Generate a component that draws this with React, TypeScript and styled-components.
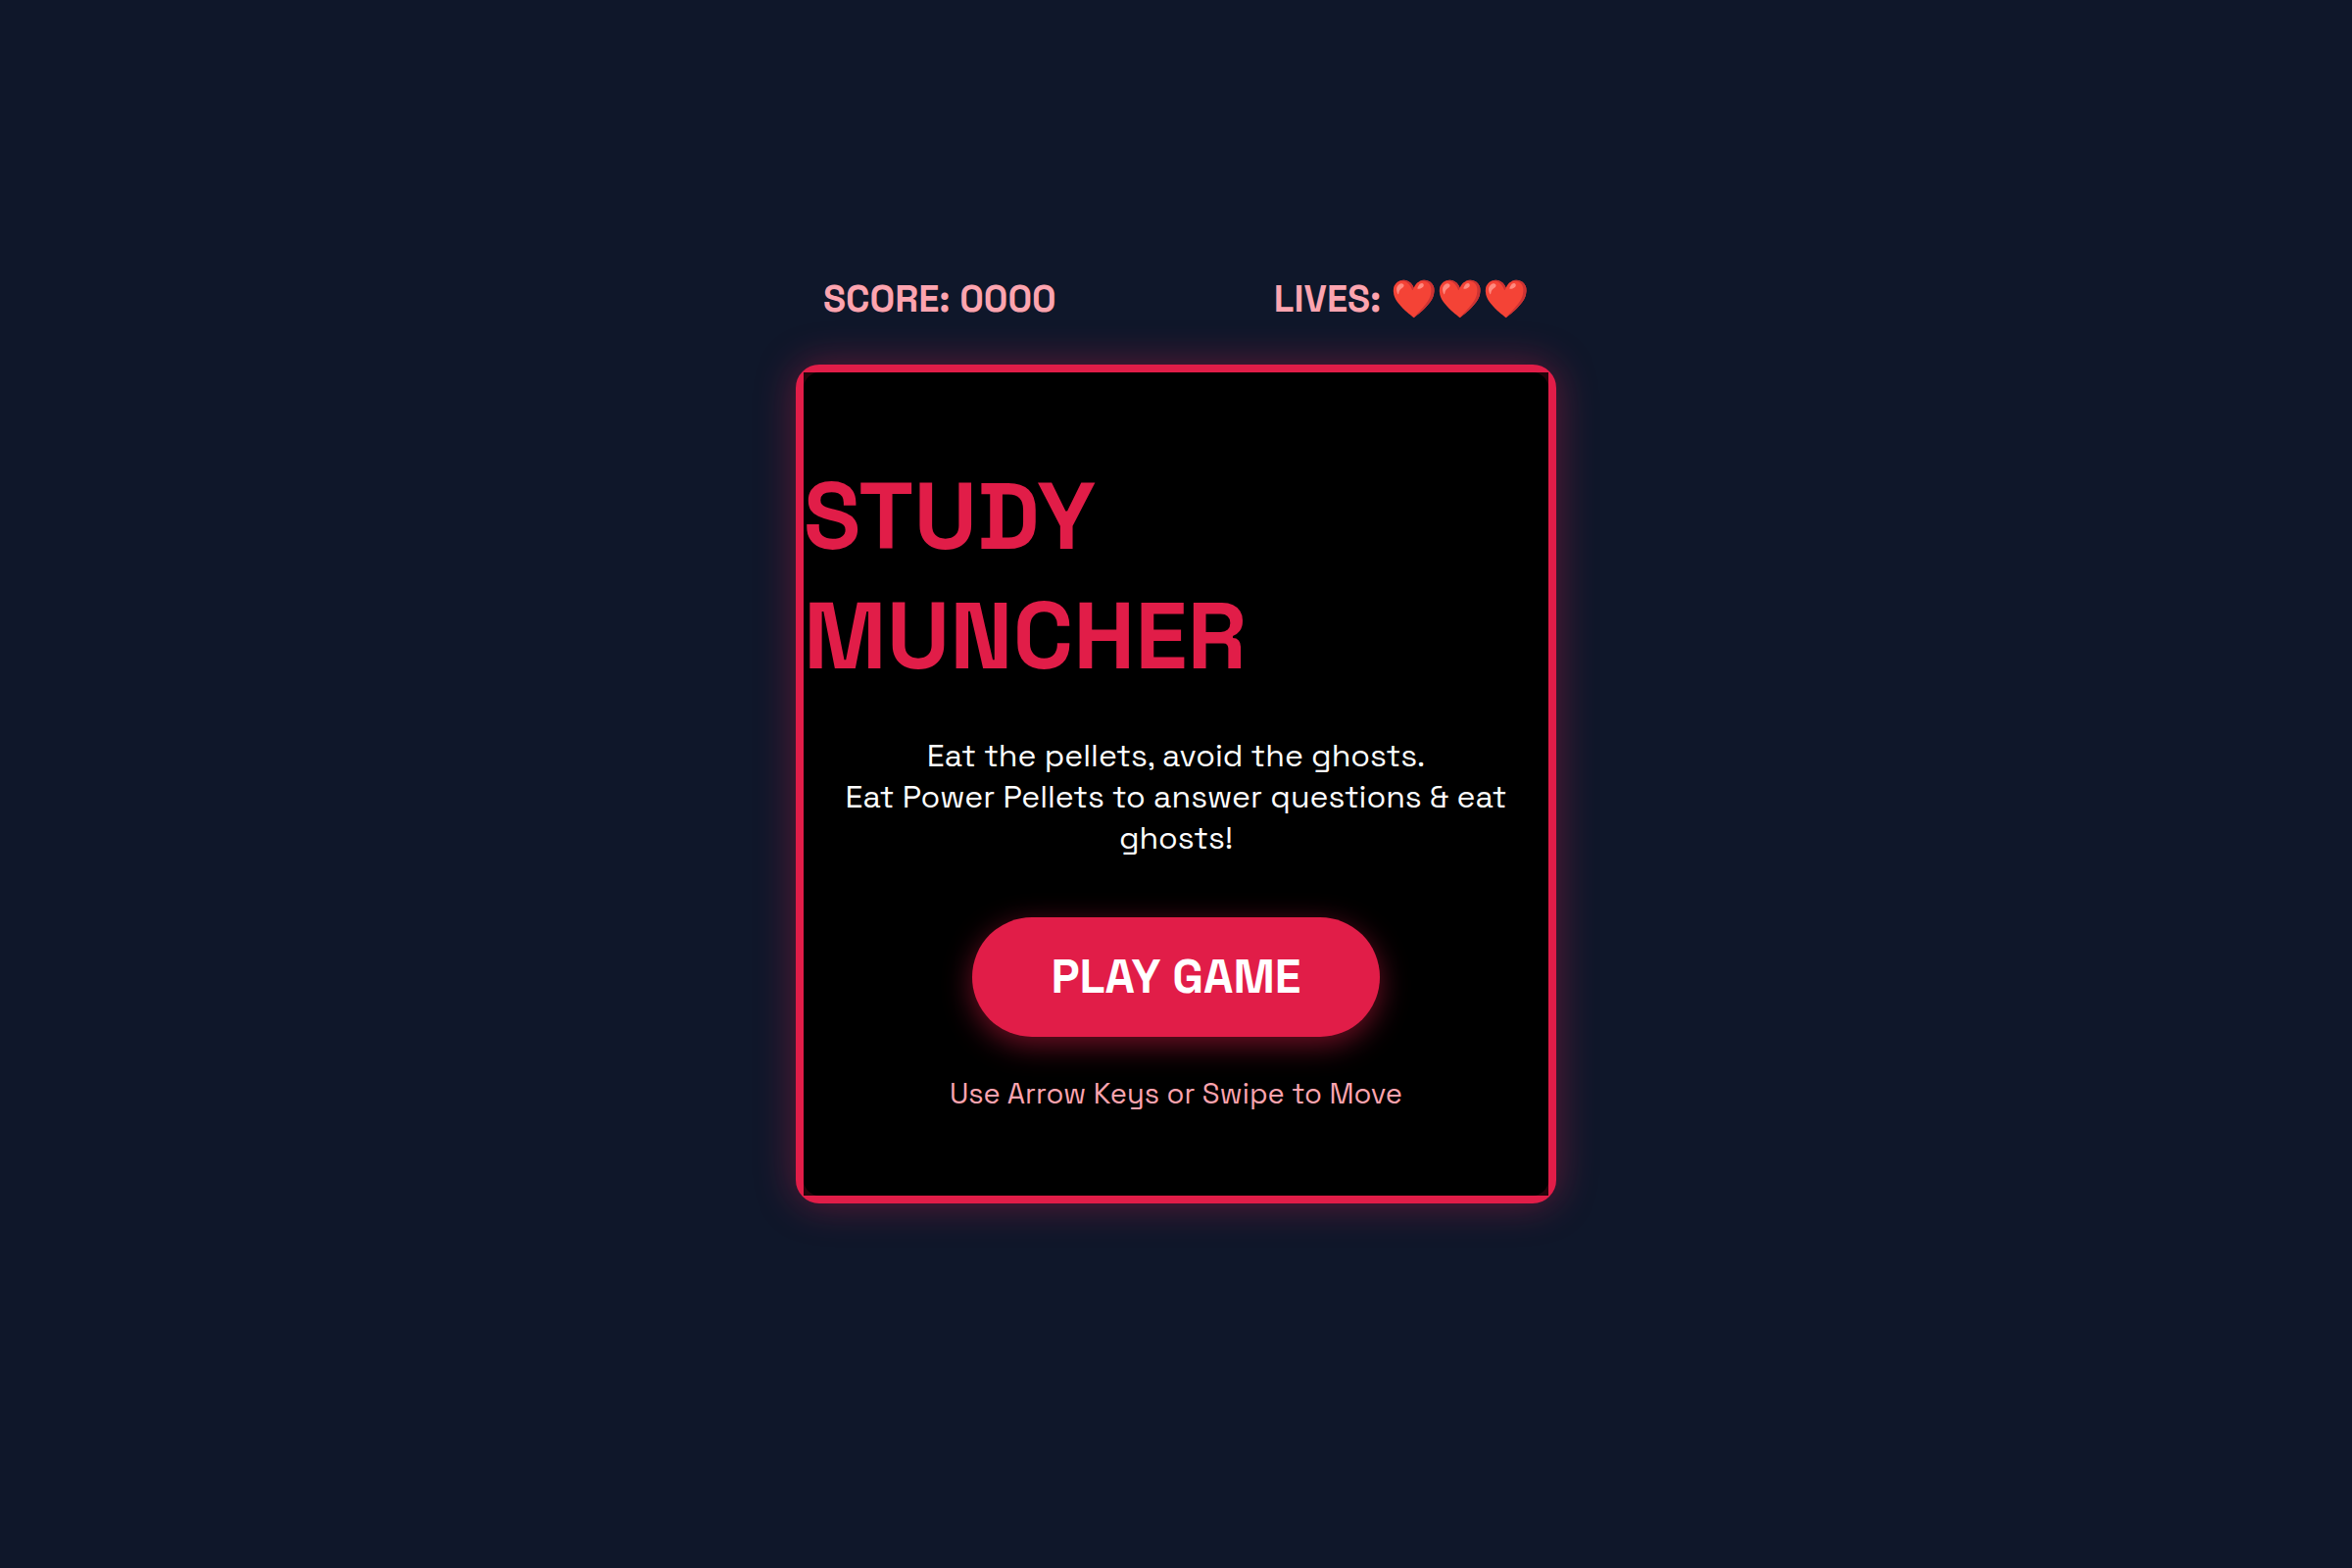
import React from "react";
import styled, { createGlobalStyle } from "styled-components";

const fontStack = `"Space Grotesk", Inter, "Liberation Sans", sans-serif`;

const GlobalStyle = createGlobalStyle`
  *, *::before, *::after {
    box-sizing: border-box;
  }
  body {
    margin: 0;
    background: #0f172a;
    color: #ffffff;
    font-family: ${fontStack};
  }
`;

const Page = styled.main`
  display: grid;
  grid-template-rows: 1fr auto 1fr;
  justify-content: center;
  min-height: 100vh;
`;

const Hud = styled.header`
  display: flex;
  align-items: center;
  justify-content: space-between;
  align-self: end;
  padding: 0 28px;
  margin-bottom: 42px;
  color: #fda4af;
  font-size: 38px;
  font-weight: 700;
  line-height: 50px;
`;

const HudItem = styled.span`
  white-space: nowrap;
`;

const Board = styled.section`
  width: 776px;
  max-width: 100vw;
  border: 8px solid #e11d48;
  border-radius: 24px;
  background: #000000;
  box-shadow: 0 0 40px rgba(225, 29, 72, 0.4);
`;

const StartScreen = styled.div`
  display: flex;
  flex-direction: column;
  align-items: center;
  justify-content: center;
  min-height: 840px;
  background: rgba(0, 0, 0, 0.85);
`;

const Title = styled.h1`
  align-self: stretch;
  margin: 0 0 40px;
  color: #e11d48;
  font-size: 96px;
  font-weight: 700;
  line-height: 122px;
`;

const Intro = styled.p`
  margin: 0 0 60px;
  padding: 0 20px;
  font-size: 32px;
  line-height: 42px;
  text-align: center;
`;

const PlayButton = styled.button`
  width: 416px;
  margin: 0 0 40px;
  padding: 30px 0;
  border: 0;
  border-radius: 61px;
  background: #e11d48;
  box-shadow: 0 8px 30px rgba(225, 29, 72, 0.5);
  color: #ffffff;
  font-family: inherit;
  font-size: 48px;
  font-weight: 700;
  line-height: 62px;
  cursor: pointer;
`;

const Hint = styled.p`
  margin: 0;
  color: #fda4af;
  font-size: 29px;
  line-height: 36px;
`;

export default function App() {
  const score = 0;
  const lives = 3;

  return (
    <>
      <GlobalStyle />
      <Page>
        <Hud>
          <HudItem>SCORE: {String(score).padStart(4, "0")}</HudItem>
          <HudItem>LIVES: {"❤️".repeat(lives)}</HudItem>
        </Hud>
        <Board>
          <StartScreen>
            <Title>
              STUDY
              <br />
              MUNCHER
            </Title>
            <Intro>
              Eat the pellets, avoid the ghosts.
              <br />
              Eat Power Pellets to answer questions &amp; eat ghosts!
            </Intro>
            <PlayButton type="button">PLAY GAME</PlayButton>
            <Hint>Use Arrow Keys or Swipe to Move</Hint>
          </StartScreen>
        </Board>
      </Page>
    </>
  );
}
